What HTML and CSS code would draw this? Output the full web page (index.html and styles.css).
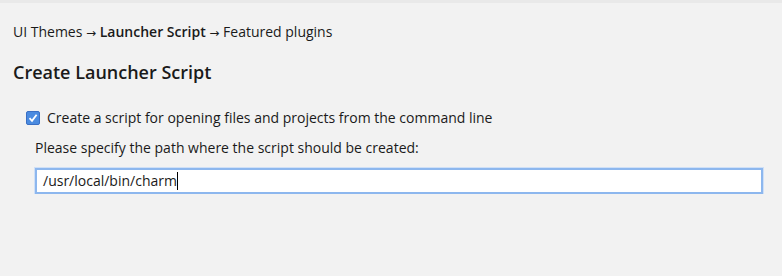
FILE: index.html
```html
<!DOCTYPE html>
<html lang="en">
<head>
  <meta charset="UTF-8" />
  <title>Create Launcher Script</title>
  <link rel="stylesheet" href="styles.css">
</head>
<body>
  <div class="page">
    <div class="crumbs">UI Themes <span class="arr">&rarr;</span> <b>Launcher Script</b> <span class="arr">&rarr;</span> Featured plugins</div>
    <h1>Create Launcher Script</h1>

    <label class="check">
      <span class="box">
        <svg width="10" height="10" viewBox="0 0 10 10"><path d="M1.5 5.2 L4 7.8 L8.6 1.8" fill="none" stroke="#fff" stroke-width="1.8"/></svg>
      </span>
      Create a script for opening files and projects from the command line
    </label>

    <div class="opts">
      <div class="hint">Please specify the path where the script should be created:</div>
      <div class="field">/usr/local/bin/charm<span class="caret"></span></div>
    </div>
  </div>
</body>
</html>
```

FILE: styles.css
```css
body {
  margin: 0;
  background: #f2f2f2;
  font-family: "Open Sans", sans-serif;
  font-size: 14px;
  color: #1a1a1a;
}
.page {
  border-top: 3px solid #e9e9e9;
  padding: 20px 19px 0 13px;
}
.crumbs {
  line-height: 18px;
}
.crumbs b {
  font-weight: 600;
}
.arr {
  font-family: "DejaVu Sans", sans-serif;
  font-size: 12px;
}
h1 {
  margin: 18px 0 0;
  font-size: 18px;
  font-weight: 600;
  line-height: 24px;
}
.check {
  display: flex;
  align-items: center;
  gap: 7px;
  margin: 25px 0 0 13px;
  line-height: 18px;
}
.box {
  width: 12px;
  height: 12px;
  border: 1px solid #3a6fc4;
  border-radius: 2px;
  background: #4b8be0;
  display: flex;
  align-items: center;
  justify-content: center;
}
.opts {
  margin-left: 22px;
}
.hint {
  margin-top: 12px;
  line-height: 18px;
}
.field {
  margin-top: 11px;
  height: 22px;
  line-height: 22px;
  padding: 0 6px;
  background: #fff;
  border: 2px solid #8db7ee;
  box-shadow: 0 0 0 1px #cfe0f7;
  display: flex;
  align-items: center;
}
.caret {
  display: inline-block;
  width: 1px;
  height: 18px;
  background: #000;
}
```
